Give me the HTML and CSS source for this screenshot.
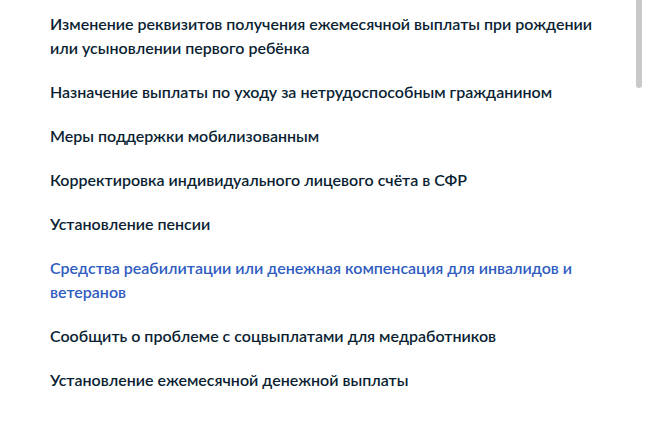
FILE: index.html
```html
<!DOCTYPE html>
<html lang="ru">
<head>
    <meta charset="UTF-8">
    <meta name="viewport" content="width=device-width, initial-scale=1.0">
    <title>Услуги</title>
    <link rel="stylesheet" href="styles.css">
</head>
<body>
    <div class="page">
        <ul class="service-list">
            <li><a href="#">Изменение реквизитов получения ежемесячной выплаты при рождении или усыновлении первого ребёнка</a></li>
            <li><a href="#">Назначение выплаты по уходу за нетрудоспособным гражданином</a></li>
            <li><a href="#">Меры поддержки мобилизованным</a></li>
            <li><a href="#">Корректировка индивидуального лицевого счёта в СФР</a></li>
            <li><a href="#">Установление пенсии</a></li>
            <li><a href="#" class="active">Средства реабилитации или денежная компенсация для инвалидов и ветеранов</a></li>
            <li><a href="#">Сообщить о проблеме с соцвыплатами для медработников</a></li>
            <li><a href="#">Установление ежемесячной денежной выплаты</a></li>
        </ul>
        <div class="scrollbar"><div class="thumb"></div></div>
    </div>
</body>
</html>
```

FILE: styles.css
```css
html, body {
    margin: 0;
    padding: 0;
    background-color: #fff;
}
body {
    font-family: Lato, 'Noto Sans', sans-serif;
    color: #0b1f33;
}
.page {
    display: flex;
    height: 446px;
}
.service-list {
    list-style: none;
    margin: 0;
    padding: 12px 0 0 50px;
    width: 560px;
    display: flex;
    flex-direction: column;
    gap: 20px;
}
.service-list a {
    display: block;
    font-size: 16px;
    line-height: 24px;
    font-weight: 600;
    color: #0b1f33;
    text-decoration: none;
}
.service-list a.active {
    color: #2f5cbf;
}
.scrollbar {
    margin-left: 26px;
    width: 6px;
}
.thumb {
    height: 88px;
    background-color: #c9c9c9;
    border-radius: 0 0 3px 3px;
}
```
